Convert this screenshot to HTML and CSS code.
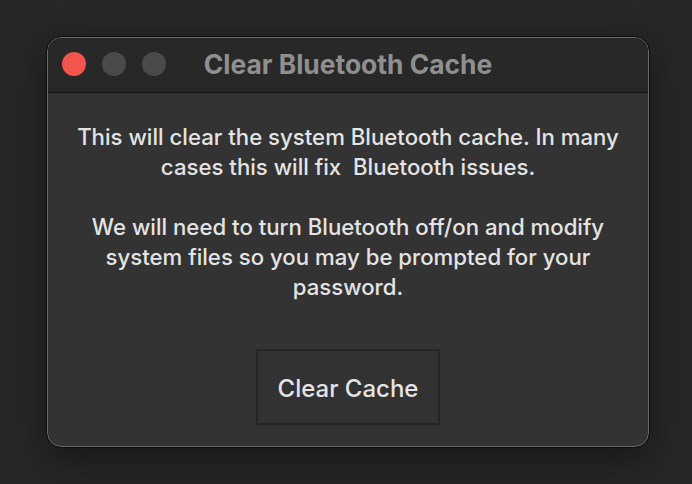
FILE: index.html
```html
<!DOCTYPE html>
<html lang="en">
<head>
  <meta charset="UTF-8" />
  <title>Clear Bluetooth Cache</title>
  <link rel="stylesheet" href="styles.css">
</head>
<body>
  <div class="window">
    <header class="titlebar">
      <div class="lights">
        <span class="light close"></span>
        <span class="light"></span>
        <span class="light"></span>
      </div>
      <h1>Clear Bluetooth Cache</h1>
      <div></div>
    </header>
    <main class="content">
      <p>This will clear the system Bluetooth cache. In many<br>cases this will fix &nbsp;Bluetooth issues.</p>
      <p>We will need to turn Bluetooth off/on and modify<br>system files so you may be prompted for your<br>password.</p>
      <button type="button">Clear Cache</button>
    </main>
  </div>
</body>
</html>
```

FILE: styles.css
```css
body {
  margin: 0;
  padding: 37px 0 0 47px;
  background-color: #262727;
  font-family: Inter, 'Noto Sans', sans-serif;
  height: 484px;
  box-sizing: border-box;
  overflow: hidden;
}
.window {
  width: 602px;
  height: 410px;
  box-sizing: border-box;
  border: 1px solid #6b6b6b;
  outline: 1px solid #0c0c0c;
  border-radius: 14px;
  background-color: #333333;
  overflow: hidden;
  display: flex;
  flex-direction: column;
  box-shadow: 0 12px 40px rgba(0,0,0,0.45);
}
.titlebar {
  height: 55px;
  flex-shrink: 0;
  box-sizing: border-box;
  background-color: #282828;
  border-bottom: 1px solid #111;
  display: grid;
  grid-template-columns: 1fr auto 1fr;
  align-items: center;
  padding: 0 14px 2px;
}
.lights {
  display: flex;
  gap: 16px;
}
.light {
  width: 24px;
  height: 24px;
  border-radius: 50%;
  background-color: #4a4a4a;
}
.light.close {
  background-color: #f2554e;
}
.titlebar h1 {
  margin: 0;
  font-size: 26.4px;
  font-weight: 700;
  color: #8f8f8f;
}
.content {
  flex: 1;
  display: flex;
  flex-direction: column;
  align-items: center;
  padding-top: 29px;
}
.content p {
  margin: 0 0 30px;
  font-size: 22.2px;
  font-weight: 500;
  line-height: 30px;
  color: #e4e4e4;
  text-align: center;
}
.content p:last-of-type {
  margin-bottom: 47px;
}
button {
  width: 184px;
  height: 76px;
  background-color: #323232;
  border: 2px solid #252525;
  color: #e4e4e4;
  font-family: inherit;
  font-size: 24px;
  font-weight: 500;
  padding: 3px 0 0;
}
```
